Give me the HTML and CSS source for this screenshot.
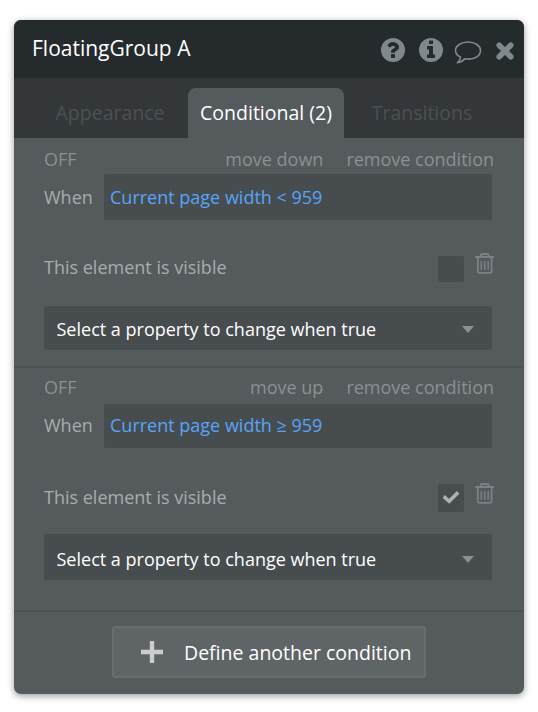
FILE: index.html
```html
<!DOCTYPE html>
<html lang="en">

<head>
    <meta charset="UTF-8">
    <meta name="viewport" content="width=device-width, initial-scale=1.0">
    <title>FloatingGroup A</title>
    <link rel="stylesheet" href="styles.css">
</head>

<body>

    <!-- Shared icons -->
    <svg class="sprite">
        <symbol id="trash" viewBox="0 0 20 22">
            <path d="M0.300 5h18.800M5.800 4.800V3.200Q5.800 2 7 2h5.400Q13.600 2 13.600 3.200v1.600M2.800 5v14.200Q2.800 20.800 4.400 20.800h10.600q1.600 0 1.600-1.600V5" fill="none" stroke="currentColor" stroke-width="1.8"/>
            <path d="M6.200 9v8.800M9.700 9v8.800M13.200 9v8.800" fill="none" stroke="currentColor" stroke-width="1.5"/>
        </symbol>
    </svg>

    <div class="panel">
        <div class="header">
            <h1 class="title">FloatingGroup A</h1>
            <div class="icons">
                <svg width="24" height="24" viewBox="0 0 1536 1536">
                    <path fill="currentColor" fill-rule="evenodd" d="M768 0a768 768 0 1 0 0 1536a768 768 0 1 0 0-1536zM896 1248q0 32-32 32H672q-32 0-32-32v-192q0-32 32-32h192q32 0 32 32zM1152 576q0 60-17 104t-61 79q-31 25-88 57q-90 51-90 96q0 32-32 32H672q-32 0-32-32v-36q0-92 90-156q24-17 72-42q94-49 94-91q0-35-41-62t-91-27q-55 0-91 25q-29 20-73 75q-18 22-43 5L426 503q-25-19-9-44Q545 256 788 256q128 0 246 99t118 221z"/>
                </svg>
                <svg width="24" height="24" viewBox="0 0 1536 1536">
                    <path fill="currentColor" fill-rule="evenodd" d="M768 0a768 768 0 1 0 0 1536a768 768 0 1 0 0-1536zM1024 1248q0 32-32 32H544q-32 0-32-32v-160q0-32 32-32h96V736h-96q-32 0-32-32V544q0-32 32-32h320q32 0 32 32v512h96q32 0 32 32zM896 352q0 32-32 32H672q-32 0-32-32V192q0-32 32-32h192q32 0 32 32z"/>
                </svg>
                <svg class="comment" width="28" height="23" viewBox="0 0 27 23">
                    <path d="M13.5 1C6.500 1 1 4.800 1 9.500c0 2.800 2 5.200 5.100 6.800C5.800 18.400 4.700 20.400 2.800 21.800C6 21.400 8.500 20 10.200 17.800C18.500 19.200 26 15.500 26 9.500C26 4.800 20.500 1 13.500 1z" fill="none" stroke="currentColor" stroke-width="1.6" stroke-linejoin="round"/>
                </svg>
                <svg class="close" width="18" height="18" viewBox="0 0 18 18">
                    <path d="M3.200 3.200l11.600 11.600M14.800 3.200L3.200 14.800" stroke="currentColor" stroke-width="5.600" stroke-linecap="round"/>
                </svg>
            </div>
        </div>

        <div class="tabs">
            <div class="tab">Appearance</div>
            <div class="tab active">Conditional (2)</div>
            <div class="tab">Transitions</div>
        </div>

        <!-- Condition 1 -->
        <div class="condition">
            <div class="actions">
                <span class="off">OFF</span>
                <span>move down</span>
                <span>remove condition</span>
            </div>
            <div class="when">
                <span class="label">When</span>
                <div class="expression">Current page width &lt; 959</div>
            </div>
            <div class="property">
                <span class="label">This element is visible</span>
                <div class="checkbox"></div>
                <svg class="trash"><use href="#trash"/></svg>
            </div>
            <div class="select">Select a property to change when true</div>
        </div>

        <!-- Condition 2 -->
        <div class="condition second">
            <div class="actions">
                <span class="off">OFF</span>
                <span>move up</span>
                <span>remove condition</span>
            </div>
            <div class="when">
                <span class="label">When</span>
                <div class="expression">Current page width ≥ 959</div>
            </div>
            <div class="property">
                <span class="label">This element is visible</span>
                <div class="checkbox">
                    <svg width="16" height="13" viewBox="0 0 16 13">
                        <path d="M2 6.600L6.200 10.300L13.900 2.600" fill="none" stroke="currentColor" stroke-width="3.600" stroke-linecap="square"/>
                    </svg>
                </div>
                <svg class="trash"><use href="#trash"/></svg>
            </div>
            <div class="select">Select a property to change when true</div>
        </div>

        <div class="footer">
            <button class="define">
                <svg width="22" height="22" viewBox="0 0 22 22">
                    <path d="M11 0v22M0 11h22" stroke="currentColor" stroke-width="4.400"/>
                </svg>
                <span>Define another condition</span>
            </button>
        </div>
    </div>

</body>

</html>
```
FILE: styles.css
```css
* {
    box-sizing: border-box;
}

body {
    margin: 0;
    padding: 20px 14px;
    background: #fff;
    font-family: "Open Sans", sans-serif;
    font-size: 18px;
    line-height: 24px;
}

.sprite {
    display: none;
}

.panel {
    width: 510px;
    height: 674px;
    border-radius: 7px;
    overflow: hidden;
    background: #555a5d;
    box-shadow: 0 2px 7px rgba(0, 0, 0, 0.4);
}

/* Header */
.header {
    display: flex;
    justify-content: space-between;
    height: 58px;
    padding: 16px 10px 0 18px;
    background: #252a2c;
}

.title {
    margin: 0;
    font-size: 21px;
    font-weight: 400;
    line-height: 24px;
    color: #fff;
}

.icons {
    display: flex;
    align-items: flex-start;
    gap: 14px;
    padding-top: 2px;
    color: #7f898d;
}

.icons .comment {
    margin: 3px 0 0 -3px;
}

.icons .close {
    margin-top: 4px;
}

/* Tabs */
.tabs {
    display: flex;
    height: 60px;
    padding: 10px 18px 0;
    background: #343739;
}

.tab {
    width: 156px;
    padding-top: 13px;
    font-size: 19.5px;
    text-align: center;
    white-space: nowrap;
    color: #4b5053;
}

.tab.active {
    border-radius: 8px 8px 0 0;
    background: #555a5d;
    color: #fff;
}

/* Conditions */
.condition {
    height: 230px;
    padding: 9px 30px 0;
    border-bottom: 2px solid #4d5255;
}

.actions {
    display: flex;
    gap: 23px;
    height: 27px;
    color: #8b9093;
}

.off {
    margin-right: auto;
}

.when {
    display: flex;
    align-items: center;
    height: 46px;
}

.when .label {
    width: 60px;
}

.label {
    color: #a7acae;
}

.expression {
    display: flex;
    align-items: center;
    width: 388px;
    height: 100%;
    padding: 0 6px;
    border-radius: 2px;
    background: #474c4f;
    color: #57a5f8;
}

.property {
    display: flex;
    align-items: flex-start;
    height: 51px;
    margin-top: 35px;
}

.property .label {
    margin-right: auto;
}

.checkbox {
    display: flex;
    align-items: center;
    justify-content: center;
    width: 26px;
    height: 26px;
    margin-top: 1px;
    border-radius: 2px;
    background: #474c4f;
    color: #abb0b3;
}

.trash {
    width: 20px;
    height: 22px;
    margin: -3px -1px 0 11px;
    color: #7c8184;
}

.select {
    display: flex;
    align-items: center;
    justify-content: space-between;
    width: 448px;
    height: 44px;
    padding: 2px 18px 0 12.5px;
    border-radius: 2px;
    background: #474c4f;
    color: #fff;
}

.select::after {
    content: "";
    border: 6px solid transparent;
    border-top: 7px solid #8b9093;
    border-bottom: 0;
}

/* The last condition has a taller checkbox and select */
.second {
    height: 244px;
    padding-top: 7px;
}

.second .actions {
    height: 29px;
}

.second .when {
    height: 44px;
}

.second .when .label,
.second .expression {
    padding-bottom: 2px;
}

.second .property {
    height: 49px;
    margin-top: 37px;
}

.second .checkbox {
    height: 28px;
    margin-top: -1px;
    padding-bottom: 1px;
}

.second .select {
    height: 46px;
    padding-top: 4px;
}

/* Footer */
.footer {
    display: flex;
    justify-content: center;
    padding-top: 14px;
}

.define {
    display: flex;
    align-items: center;
    gap: 21px;
    width: 314px;
    height: 52px;
    padding: 0 0 0 27px;
    border: 2px solid #686d70;
    border-radius: 3px;
    background: #5f6467;
    font: inherit;
    font-size: 19.5px;
    white-space: nowrap;
    color: #fff;
}

.define svg {
    margin-bottom: 1px;
    color: #cdcdcd;
}

.define span {
    padding-top: 1px;
}
```
